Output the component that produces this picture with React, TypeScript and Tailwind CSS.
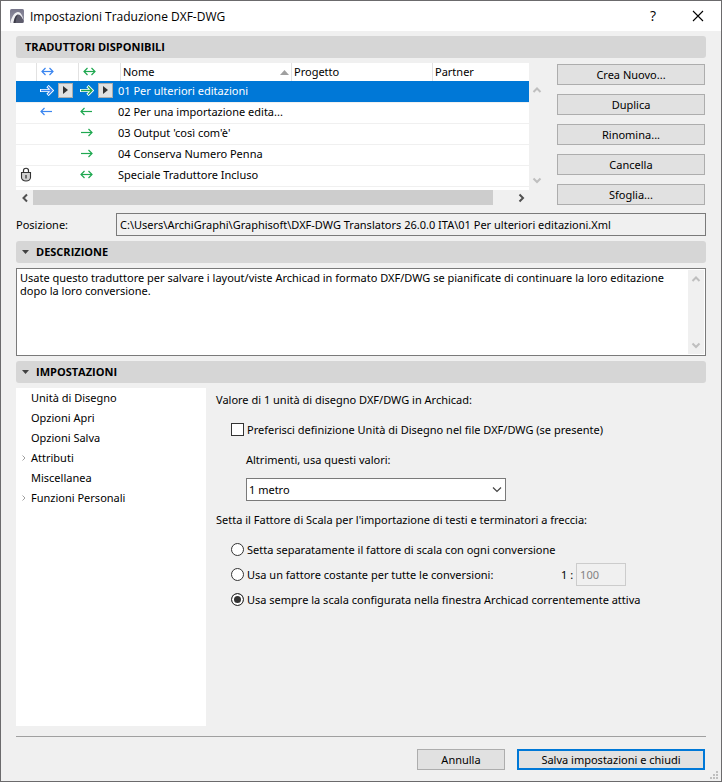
import { useState } from "react"
import type { ReactNode } from "react"

type Direction = "left" | "right" | "both" | "open"

const translators: {
  id: number
  name: string
  locked?: boolean
  blue?: Direction
  green?: Direction
}[] = [
  { id: 1, name: "01 Per ulteriori editazioni", blue: "open", green: "open" },
  { id: 2, name: "02 Per una importazione edita...", blue: "left", green: "left" },
  { id: 3, name: "03 Output 'così com'è'", green: "right" },
  { id: 4, name: "04 Conserva Numero Penna", green: "right" },
  { id: 5, name: "Speciale Traduttore Incluso", green: "both", locked: true },
]

const actions = ["Crea Nuovo...", "Duplica", "Rinomina...", "Cancella", "Sfoglia..."]

const pages = [
  { name: "Unità di Disegno" },
  { name: "Opzioni Apri" },
  { name: "Opzioni Salva" },
  { name: "Attributi", expandable: true },
  { name: "Miscellanea" },
  { name: "Funzioni Personali", expandable: true },
]

const scaleOptions = [
  { value: "separate", label: "Setta separatamente il fattore di scala con ogni conversione" },
  { value: "constant", label: "Usa un fattore costante per tutte le conversioni:" },
  { value: "window", label: "Usa sempre la scala configurata nella finestra Archicad correntemente attiva" },
]

function Arrow({ direction, color }: { direction: Direction; color: string }) {
  if (direction === "open") {
    return (
      <svg width="14" height="11" viewBox="0 0 14 11" fill="none">
        <path d="M0 5.5H12M7.500 1L12 5.5L7.500 10" stroke="#fff" strokeWidth="3.2" />
        <path d="M1 5.5H12M8 1.500L12 5.5L8 9.500" stroke={color} strokeWidth="1.3" />
      </svg>
    )
  }
  return (
    <svg width="13" height="9" viewBox="0 0 13 9" fill="none" stroke={color} strokeWidth="1.2">
      <path d="M1 4.5H12" />
      {direction !== "right" && <path d="M4.5 1L1 4.5L4.5 8" />}
      {direction !== "left" && <path d="M8.5 1L12 4.5L8.5 8" />}
    </svg>
  )
}

function Chevron({ path, size }: { path: "up" | "down" | "left" | "right"; size: number }) {
  const paths = {
    up: "M1.5 7L5 3.5L8.5 7",
    down: "M1.5 3.5L5 7L8.5 3.5",
    left: "M7 1.5L3.5 5L7 8.5",
    right: "M3.5 1.5L7 5L3.5 8.5",
  }
  return (
    <svg width={size} height={size} viewBox="0 0 10 10" fill="none" stroke="currentColor" strokeWidth="2">
      <path d={paths[path]} />
    </svg>
  )
}

function PlayButton({ label }: { label: string }) {
  return (
    <button aria-label={label} className="w-[15px] h-[15px] bg-[#e1e1e1] border border-[#adadad] flex items-center justify-center">
      <svg width="5" height="8" viewBox="0 0 5 8" fill="#333">
        <path d="M0 0L5 4L0 8Z" />
      </svg>
    </button>
  )
}

function SectionTitle({ children, collapsible }: { children: ReactNode; collapsible?: boolean }) {
  if (!collapsible) {
    return (
      <h2 className="h-[22px] bg-[#d6d6d6] rounded-[3px] pl-[9px] pb-px flex items-center font-['Open_Sans',sans-serif] font-bold">
        {children}
      </h2>
    )
  }
  return (
    <h2 className="font-['Open_Sans',sans-serif] font-bold">
      <button className="w-full h-[22px] bg-[#d6d6d6] rounded-[3px] pl-1.5 pb-px flex items-center gap-[7px]">
        <svg width="7" height="4" viewBox="0 0 7 4" fill="#404040">
          <path d="M0 0H7L3.5 4Z" />
        </svg>
        {children}
      </button>
    </h2>
  )
}

export default function App() {
  const [selected, setSelected] = useState(1)
  const [prefer, setPrefer] = useState(false)
  const [scale, setScale] = useState("window")

  return (
    <div className="min-h-screen flex flex-col bg-[#f0f0f0] border border-[#6b6a6c] text-black text-[11px] leading-[13px] font-['Noto_Sans','Open_Sans',sans-serif]">
      <header className="h-[30px] bg-white flex items-center pl-[9px] pr-[17px]">
        <svg width="14" height="14" viewBox="0 0 14 14">
          <defs>
            <linearGradient id="logo" x1="0" y1="0" x2="0" y2="1">
              <stop offset="0" stopColor="#77768a" />
              <stop offset="1" stopColor="#9c9bab" />
            </linearGradient>
          </defs>
          <rect width="14" height="14" rx="1.5" fill="url(#logo)" />
          <path d="M4.500 14C5 10 6.500 7 8.500 5.500C10.500 6 12 8.500 13.500 11.500V12.500A1.500 1.500 0 0 1 12 14Z" fill="#5d5c6c" />
          <path d="M.5 13C2 7 5 3 8 3C10.500 3 12.500 6.500 13.500 11C11.500 7 10 5.500 8.300 5.500C5.500 5.500 4.200 9.500 3.500 14H1.500Z" fill="#f0f0f3" />
          <path d="M3.500 14C4.200 9.500 5.500 6 8.300 5.500C6.500 7.500 5.800 10.500 5.500 14Z" fill="#3c3b47" />
        </svg>
        <h1 className="flex-1 pl-1.5 text-[12px] font-['Open_Sans',sans-serif]">Impostazioni Traduzione DXF-DWG</h1>
        <button aria-label="Aiuto" className="w-3 mr-[33px] pb-0.5 text-[14px] font-['Open_Sans',sans-serif] font-medium">?</button>
        <button aria-label="Chiudi">
          <svg width="12" height="12" viewBox="0 0 12 12" stroke="#000" strokeWidth="1.1">
            <path d="M1 1L11 11M11 1L1 11" />
          </svg>
        </button>
      </header>

      <main className="flex-1 flex flex-col px-[15px] pt-[5px]">
        <SectionTitle>TRADUTTORI DISPONIBILI</SectionTitle>

        <div className="flex mt-[5px]">
          <div className="flex-1 min-w-0">
            <div className="h-[127px] bg-white">
              <table className="w-full table-fixed border-collapse text-left">
                <colgroup>
                  <col className="w-5" />
                  <col className="w-[42px]" />
                  <col className="w-[38px]" />
                  <col className="w-[175px]" />
                  <col className="w-[141px]" />
                  <col />
                </colgroup>
                <thead>
                  <tr className="h-[18px]">
                    <th className="p-0" aria-label="Bloccato" />
                    <th className="p-0" aria-label="Importa">
                      <div className="h-[18px] border-l border-[#e2e2e2] pl-1 pb-px flex items-center"><Arrow direction="both" color="#3b86f0" /></div>
                    </th>
                    <th className="p-0" aria-label="Esporta">
                      <div className="h-[18px] border-l border-[#e2e2e2] pl-1 pb-px flex items-center"><Arrow direction="both" color="#1fa850" /></div>
                    </th>
                    <th className="p-0 font-normal">
                      <div className="h-[18px] ml-1 border-l border-[#e2e2e2] pl-0.5 pr-0.5 pb-0.5 flex items-center justify-between">
                        Nome
                        <svg width="9" height="5" viewBox="0 0 9 5" fill="#a0a0a0" className="mt-0.5">
                          <path d="M0 5L4.5 0L9 5Z" />
                        </svg>
                      </div>
                    </th>
                    <th className="p-0 font-normal">
                      <div className="h-[18px] border-l border-[#e2e2e2] pl-0.5 pb-0.5 flex items-center">Progetto</div>
                    </th>
                    <th className="p-0 font-normal">
                      <div className="h-[18px] border-l border-[#e2e2e2] pl-0.5 pb-0.5 flex items-center">Partner</div>
                    </th>
                  </tr>
                </thead>
                <tbody>
                  {translators.map((item) => {
                    const active = item.id === selected
                    return (
                      <tr
                        key={item.id}
                        onClick={() => setSelected(item.id)}
                        className={active ? "h-[21px] border-b border-[#f0f0f0] bg-[#0078d7] text-white" : "h-[21px] border-b border-[#f0f0f0]"}
                      >
                        <td className="p-0 pl-1 pb-0.5">
                          {item.locked && (
                            <svg width="12" height="15" viewBox="0 0 12 15" className="block">
                              <path d="M3.500 6V3.500C3.500 .5 8.500 .5 8.500 3.500V6" fill="none" stroke="#333" strokeWidth="1.2" />
                              <path d="M1.500 5.500H10.500V10.500C10.500 12.500 8.500 14 6 14S1.500 12.500 1.500 10.500Z" fill="#d0d0d0" stroke="#333" strokeWidth="1.1" />
                              <path d="M6 8V11.500" stroke="#555" strokeWidth="1.6" />
                            </svg>
                          )}
                        </td>
                        <td className="p-0 pl-1 pb-0.5">
                          <div className="flex items-center gap-1">
                            {item.blue && <Arrow direction={item.blue} color="#3b86f0" />}
                            {item.blue === "open" && <PlayButton label="Opzioni importazione" />}
                          </div>
                        </td>
                        <td className="p-0 pl-0.5 pb-0.5">
                          <div className="flex items-center gap-1">
                            {item.green && <Arrow direction={item.green} color="#1fa850" />}
                            {item.green === "open" && <PlayButton label="Opzioni esportazione" />}
                          </div>
                        </td>
                        <td className="p-0 pl-0.5 pb-0.5 whitespace-nowrap">{item.name}</td>
                        <td className="p-0" />
                        <td className="p-0" />
                      </tr>
                    )
                  })}
                </tbody>
              </table>
            </div>
            <div className="h-[15px] flex items-center text-[#505050]">
              <button aria-label="Scorri a sinistra" className="w-[17px] flex justify-center"><Chevron path="left" size={10} /></button>
              <div className="flex-1 h-full"><div className="w-[96%] h-full bg-[#cdcdcd]" /></div>
              <button aria-label="Scorri a destra" className="w-[17px] flex justify-center"><Chevron path="right" size={10} /></button>
            </div>
          </div>

          <div className="w-4 pt-[22px] pb-5 flex flex-col items-center justify-between text-[#bfbfbf]">
            <Chevron path="up" size={10} />
            <Chevron path="down" size={10} />
          </div>

          <div className="w-[148px] ml-3 mr-px pt-px flex flex-col gap-[9px]">
            {actions.map((action) => (
              <button key={action} className="h-[21px] bg-[#e1e1e1] border border-[#adadad]">{action}</button>
            ))}
          </div>
        </div>

        <div className="flex items-center mt-2">
          <label htmlFor="position" className="w-[100px]">Posizione:</label>
          <input
            id="position"
            readOnly
            value="C:\Users\ArchiGraphi\Graphisoft\DXF-DWG Translators 26.0.0 ITA\01 Per ulteriori editazioni.Xml"
            className="flex-1 min-w-0 h-[23px] px-[3px] bg-[#f0f0f0] border border-[#7a7a7a]"
          />
        </div>

        <div className="mt-[5px]">
          <SectionTitle collapsible>DESCRIZIONE</SectionTitle>
        </div>
        <div className="mt-[5px] h-[88px] bg-white border border-[#7a7a7a] p-px flex">
          <textarea
            aria-label="Descrizione"
            className="flex-1 resize-none overflow-hidden pl-0.5 pt-px pr-4 outline-none"
            defaultValue="Usate questo traduttore per salvare i layout/viste Archicad in formato DXF/DWG se pianificate di continuare la loro editazione dopo la loro conversione."
          />
          <div className="w-4 bg-[#f0f0f0] flex flex-col items-center justify-between py-1 text-[#bfbfbf]">
            <Chevron path="up" size={10} />
            <Chevron path="down" size={10} />
          </div>
        </div>

        <div className="mt-[5px]">
          <SectionTitle collapsible>IMPOSTAZIONI</SectionTitle>
        </div>
        <div className="flex-1 flex gap-2.5 mt-[5px]">
          <nav className="w-[190px] bg-white">
            <ul>
              {pages.map((page) => (
                <li key={page.name}>
                  <button className="w-full h-5 pb-0.5 flex items-center text-left">
                    <span className="w-[15px] flex justify-center">
                      {page.expandable && (
                        <svg width="4" height="6" viewBox="0 0 4 6" fill="none" stroke="#a0a0a0" className="mt-px">
                          <path d="M.5 .5L3 3L.5 5.500" />
                        </svg>
                      )}
                    </span>
                    {page.name}
                  </button>
                </li>
              ))}
            </ul>
          </nav>

          <section className="flex-1 pt-px">
            <p className="h-5 flex items-center">Valore di 1 unità di disegno DXF/DWG in Archicad:</p>
            <label className="h-5 mt-2.5 pl-[15px] flex items-center gap-[3px]">
              <input
                type="checkbox"
                checked={prefer}
                onChange={(e) => setPrefer(e.target.checked)}
                className="appearance-none w-[13px] h-[13px] bg-white border border-[#333] checked:bg-[#333]"
              />
              Preferisci definizione Unità di Disegno nel file DXF/DWG (se presente)
            </label>
            <label htmlFor="unit" className="h-5 mt-2.5 pl-[30px] flex items-center">Altrimenti, usa questi valori:</label>
            <div className="relative w-[260px] mt-[9px] ml-[30px]">
              <select id="unit" className="appearance-none w-full h-[23px] pl-0.5 bg-white border border-[#7a7a7a]">
                <option>1 metro</option>
              </select>
              <svg width="10" height="6" viewBox="0 0 10 6" fill="none" stroke="#444" strokeWidth="1.2" className="absolute right-1 top-[9px] pointer-events-none">
                <path d="M1 .5L5 4.500L9 .5" />
              </svg>
            </div>

            <p className="h-5 mt-2 flex items-center">Setta il Fattore di Scala per l'importazione di testi e terminatori a freccia:</p>
            <div className="pl-[15px] mt-2.5 flex flex-col gap-[5px]">
              {scaleOptions.map((option) => (
                <div key={option.value} className="h-5 flex items-center">
                  <label className="flex items-center gap-[3px]">
                    <input
                      type="radio"
                      name="scale"
                      value={option.value}
                      checked={scale === option.value}
                      onChange={() => setScale(option.value)}
                      className="appearance-none w-[13px] h-[13px] rounded-full bg-white border border-[#333] checked:bg-[#333] checked:shadow-[inset_0_0_0_2px_white]"
                    />
                    <span className={option.value === "constant" ? "w-[314px]" : ""}>{option.label}</span>
                  </label>
                  {option.value === "constant" && (
                    <label className="flex items-center gap-[3px]">
                      1 :
                      <input disabled defaultValue="100" className="w-[50px] h-[23px] px-[3px] bg-[#f0f0f0] border border-[#ccc] text-[#838383]" />
                    </label>
                  )}
                </div>
              ))}
            </div>
          </section>
        </div>
      </main>

      <footer className="mt-2.5 mx-[15px] border-t border-[#a0a0a0] pt-3 pb-[11px] pr-px flex justify-end gap-3">
        <button className="w-[88px] h-[21px] bg-[#e1e1e1] border border-[#adadad]">Annulla</button>
        <button className="w-[188px] h-[21px] bg-[#e1e1e1] border-2 border-[#0078d7]">Salva impostazioni e chiudi</button>
      </footer>
      <svg width="8" height="8" viewBox="0 0 8 8" fill="#bfbfbf" className="absolute right-1 bottom-[3px]">
        <path d="M6 0H8V2H6ZM3 3H5V5H3ZM6 3H8V5H6ZM0 6H2V8H0ZM3 6H5V8H3ZM6 6H8V8H6Z" />
      </svg>
    </div>
  )
}
